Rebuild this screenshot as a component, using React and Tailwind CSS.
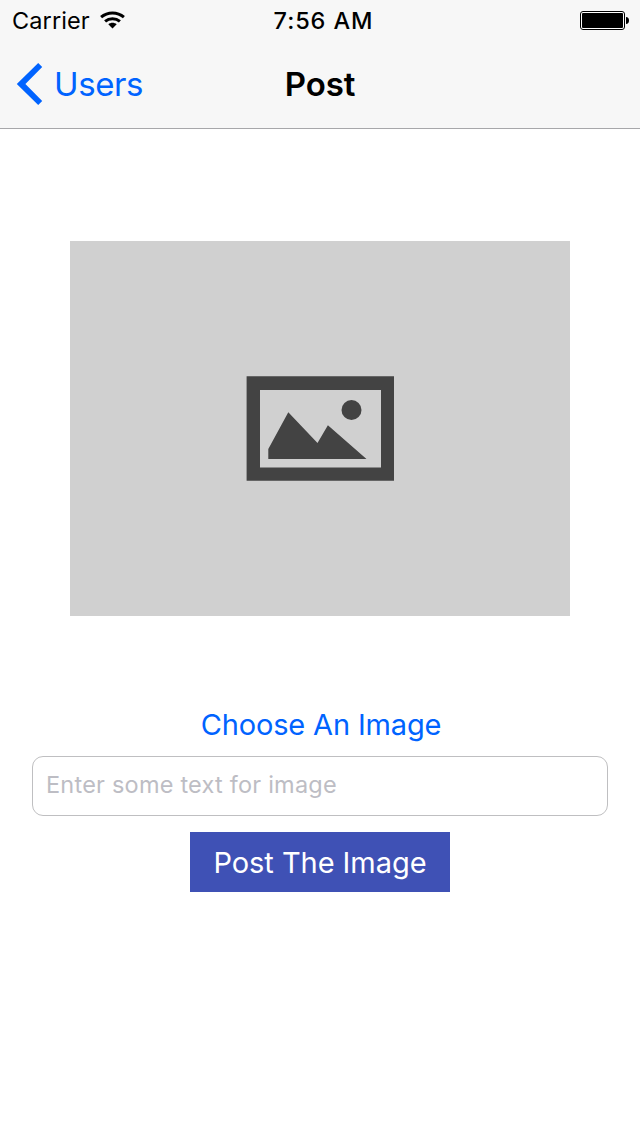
function StatusBar() {
  return (
    <div className="grid h-10 grid-cols-3 items-center pl-3 pr-[11px] text-[23.5px] leading-10">
      <div className="flex items-center gap-[10px]">
        <span className="pt-0.5 leading-[38px] tracking-[0.1px]">Carrier</span>
        <svg width="26" height="18" viewBox="0 0 26 18" fill="none" stroke="#000" strokeWidth="3">
          <path d="M1.1 6.2C7.6 0.6 17.4 0.6 23.9 6.2" />
          <path d="M5.1 10.4C9.3 6.8 15.7 6.8 19.9 10.4" />
          <path d="M12.5 17.4L8.3 13.2C10.7 11.2 14.3 11.2 16.7 13.2Z" fill="#000" stroke="none" />
        </svg>
      </div>
      <span className="pt-0.5 pl-[6px] text-center leading-[38px] font-medium tracking-[0.9px] whitespace-nowrap">7:56 AM</span>
      <svg className="justify-self-end" width="49" height="20" viewBox="0 0 49 20">
        <rect x="0.5" y="1.5" width="44" height="18" rx="2.5" fill="#fff" stroke="#000" />
        <rect x="2" y="3" width="41" height="15" rx="1" fill="#000" />
        <path d="M46 7C48 7 49 8.4 49 10.5S48 14 46 14Z" fill="#000" />
      </svg>
    </div>
  );
}

function NavBar() {
  return (
    <nav className="grid h-[88px] grid-cols-3 items-center pl-4 pr-4 text-[33px] leading-[88px]">
      <a className="flex items-center gap-[11px] text-[#0063ff]">
        <svg width="27" height="42" viewBox="0 0 27 42" fill="#0063ff">
          <path d="M22.2 0L26.2 4L9.4 21L26.2 38L22.2 42L0.8 21Z" />
        </svg>
        <span className="tracking-[-0.4px]">Users</span>
      </a>
      <h1 className="text-center font-semibold tracking-[-0.1px]">Post</h1>
    </nav>
  );
}

function Placeholder() {
  return (
    <div className="mt-28 flex h-[375px] w-[500px] items-center justify-center bg-[#d0d0d0]">
      <svg width="148" height="105" viewBox="0 0 148 105" fill="#434343">
        <path fillRule="evenodd" d="M0.6 0.2H148V104.8H0.6ZM14 14V91.5H135V14Z" />
        <path d="M22.3 83V73L42.3 36.3L71.5 67L81.9 49.3L120.5 83Z" />
        <circle cx="105.5" cy="34" r="10" />
      </svg>
    </div>
  );
}

export default function App() {
  return (
    <div className="flex h-[1136px] w-[640px] flex-col bg-white font-['Inter','Liberation_Sans',sans-serif] text-black">
      <header className="h-[129px] border-b border-[#a7a7aa] bg-[#f7f7f7]">
        <StatusBar />
        <NavBar />
      </header>
      <main className="flex flex-col items-center">
        <Placeholder />
        <button className="mt-[78px] h-[62px] pl-0.5 text-[29px] tracking-[-0.15px] whitespace-nowrap text-[#0063ff]">Choose An Image</button>
        <input
          className="h-[60px] w-[576px] rounded-[11px] border border-[#bfbfc1] pb-1 pl-[13px] text-[23.5px] tracking-[0.22px] outline-none placeholder:text-[#bdbdc4]"
          placeholder="Enter some text for image"
        />
        <button className="mt-4 h-[60px] w-[260px] bg-[#3f51b5] pt-0.5 text-[29px] tracking-[-0.05px] whitespace-nowrap text-white">Post The Image</button>
      </main>
    </div>
  );
}
